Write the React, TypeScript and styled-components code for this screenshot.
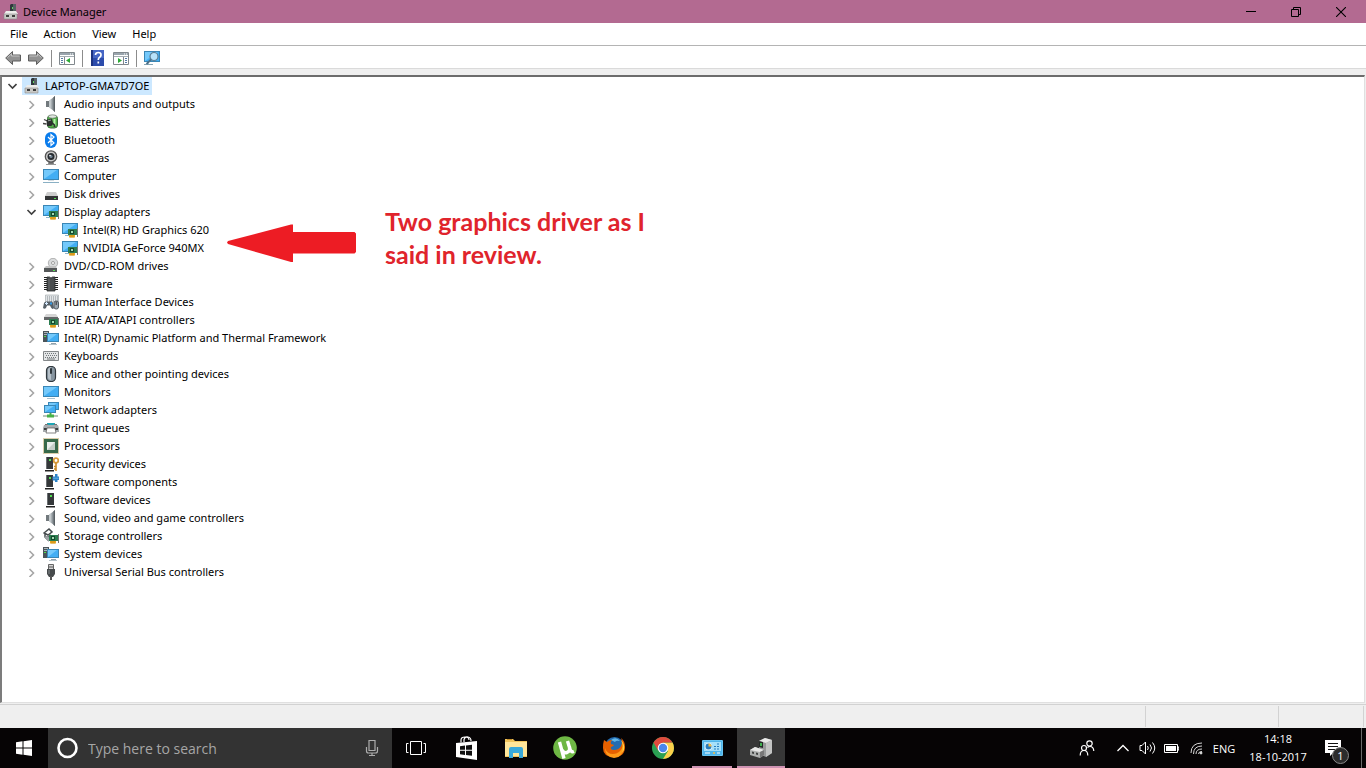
import React from "react";
import styled, { createGlobalStyle } from "styled-components";

const GlobalStyle = createGlobalStyle`
  * { box-sizing: border-box; }
  html, body { margin: 0; padding: 0; }
  body { font-family: "Noto Sans", "Open Sans", sans-serif; font-size: 11px; color: #000; background: #fff; overflow: hidden; }
  button { font: inherit; color: inherit; border: 0; margin: 0; padding: 0; background: transparent; }
  svg { display: block; flex: none; }
  ul { list-style: none; margin: 0; padding: 0; }
`;

const Desktop = styled.div`
  display: flex;
  flex-direction: column;
  height: 100vh;
`;

const Window = styled.main`
  flex: 1;
  min-height: 0;
  display: flex;
  flex-direction: column;
  background: #fff;
`;

const TitleBar = styled.header`
  display: flex;
  align-items: center;
  flex: none;
  height: 23px;
  padding: 0 3px;
  background: #b36a91;
`;

const Title = styled.h1`
  flex: 1;
  margin: 0 0 0 4px;
  font-size: 11px;
  line-height: 16px;
  font-weight: 400;
`;

const CaptionButton = styled.button`
  display: flex;
  align-items: center;
  justify-content: center;
  width: 45px;
  height: 20px;
`;

const MenuBar = styled.nav`
  display: flex;
  flex: none;
  height: 23px;
  padding-left: 2px;
  border-bottom: 1px solid #b4b4b4;
`;

const MenuItem = styled.button`
  padding: 0 8px;
  line-height: 22px;
`;

const Toolbar = styled.div`
  display: flex;
  align-items: center;
  flex: none;
  gap: 7px;
  height: 23px;
  padding: 2px 5px 0;
  border-bottom: 1px solid #dadada;
`;

const ToolButton = styled.button`
  width: 16px;
  height: 16px;
`;

const Separator = styled.span`
  width: 1px;
  height: 17px;
  background: #8c8c8c;
`;

const Frame = styled.section`
  flex: 1;
  min-height: 0;
  display: flex;
  flex-direction: column;
  padding: 6px 1px 1px 0;
  background: #efefef;
`;

const TreePanel = styled.div`
  position: relative;
  flex: 1;
  min-height: 0;
  border: 1px solid #e0e0e0;
  border-top: 2px solid #6c6c6c;
  border-left: 2px solid #7c7c7c;
  background: #fff;
  overflow: hidden;
`;

const Row = styled.div<{ $level: number }>`
  display: flex;
  align-items: center;
  gap: 2px;
  height: 18px;
  padding-left: ${(p) => 2 + p.$level * 19}px;
`;

const Twisty = styled.button`
  display: flex;
  align-items: center;
  justify-content: center;
  width: 16px;
  height: 18px;
`;

const TwistySpace = styled.span`
  width: 16px;
`;

const Node = styled.span<{ $selected?: boolean }>`
  display: flex;
  align-items: center;
  gap: 5px;
  height: 18px;
  padding: 0 3px 0 2px;
  line-height: 18px;
  white-space: nowrap;
  background: ${(p) => (p.$selected ? "#cce8ff" : "transparent")};
`;

const Annotation = styled.aside`
  position: absolute;
  left: 225px;
  top: 128px;
  display: flex;
  gap: 29px;
  color: #e0242c;
`;

const ArrowHolder = styled.span`
  padding-top: 18px;
`;

const Note = styled.p`
  width: 290px;
  margin: 0;
  font-family: Lato, "Open Sans", sans-serif;
  font-size: 25px;
  font-weight: 700;
  line-height: 33px;
`;

const StatusBar = styled.footer`
  display: flex;
  justify-content: flex-end;
  flex: none;
  height: 24px;
  padding: 1px 2px 1px 0;
  border-top: 1px solid #d2d2d2;
  background: #efefef;
`;

const StatusCell = styled.span<{ $width: number }>`
  width: ${(p) => p.$width}px;
  border-left: 1px solid #d2d2d2;
`;

const Taskbar = styled.footer`
  display: flex;
  flex: none;
  height: 40px;
  background: #060405;
  color: #fff;
  font-family: "Open Sans", "Noto Sans", sans-serif;
`;

const TaskButton = styled.button<{ $active?: boolean }>`
  display: flex;
  align-items: center;
  justify-content: center;
  width: 48px;
  height: 40px;
  background: ${(p) => (p.$active ? "#373737" : "transparent")};
`;

const RunningButton = styled(TaskButton)<{ $inset: number }>`
  position: relative;
  &::after {
    content: "";
    position: absolute;
    left: ${(p) => p.$inset}px;
    right: ${(p) => p.$inset}px;
    bottom: 0;
    height: 2px;
    background: #cf93b3;
  }
`;

const SearchBox = styled.label`
  display: flex;
  align-items: center;
  width: 344px;
  padding: 0 12px 0 8px;
  background: #333;
`;

const SearchInput = styled.input`
  flex: 1;
  min-width: 0;
  border: 0;
  padding: 0 10px;
  outline: 0;
  background: transparent;
  color: #fff;
  font: 14px "Open Sans", "Noto Sans", sans-serif;
  &::placeholder { color: #a6a6a6; opacity: 1; }
`;

const PinnedApps = styled.nav`
  display: flex;
  gap: 1px;
  margin-left: 3px;
`;

const Tray = styled.div`
  display: flex;
  margin-left: auto;
`;

const TrayButton = styled.button<{ $width: number }>`
  display: flex;
  align-items: center;
  justify-content: center;
  width: ${(p) => p.$width}px;
  height: 40px;
`;

const PeopleButton = styled(TrayButton)`
  margin-right: 6px;
`;

const Clock = styled(TrayButton)`
  flex-direction: column;
  line-height: 18px;
`;

const NoticeButton = styled(TrayButton)`
  position: relative;
`;

const Badge = styled.span`
  position: absolute;
  right: 12px;
  bottom: 4px;
  width: 17px;
  height: 17px;
  border: 1px solid #8a8a8a;
  border-radius: 9px;
  background: #2c2c2c;
  font-size: 11px;
  line-height: 15px;
  text-align: center;
`;

const ShowDesktop = styled.button`
  width: 5px;
  border-left: 1px solid #6a6a6a;
`;

/* Shared pieces of the device icons */

const Screen = ({ x = 0, y = 1, w = 16, h = 11 }) => (
  <g>
    <rect x={x} y={y} width={w} height={h} fill="#3a86b5" />
    <rect x={x + 1} y={y + 1} width={w - 2} height={h - 2} fill="#42aef4" />
    <path d={`M${x + 1} ${y + h - 1}V${y + 1}H${x + w - 2}Z`} fill="#74c9fb" />
  </g>
);

const Card = () => (
  <g>
    <rect x="6" y="7" width="9" height="6" fill="#2c7d50" />
    <rect x="8" y="8" width="4" height="4" fill="#15482e" />
    <rect x="9" y="9" width="2" height="2" fill="#9fdcb0" />
    <rect x="15" y="6" width="1" height="9" fill="#777" />
    <path d="M7 13h6v2.500H7z" fill="#e8a721" />
    <path d="M9 13v3M11 13v3" stroke="#b87a0c" strokeWidth=".5" />
  </g>
);

const Tower = ({ x = 4 }) => (
  <g>
    <path d={`M${x} 1h7v12h-7z`} fill="#35383a" />
    <path d={`M${x} 1h1v12h-1z`} fill="#6b6f72" />
    <path d={`M${x - 1} 14h9v1.500h-9z`} fill="#222" />
    <rect x={x + 3} y="3" width="2" height="2" fill="#52e052" />
  </g>
);

const Speaker = (
  <g>
    <path d="M3 5h3v6H3z" fill="#72797d" />
    <path d="M6 5l6-5v16l-6-5z" fill="#8d959a" />
    <path d="M6 5l2.500-2v10L6 11z" fill="#c3c9cc" />
    <path d="M10.500 1.200L12 0v16l-1.500-1.200z" fill="#596064" />
  </g>
);

const SystemPc = (
  <g>
    <path d="M0 1h6v11H0z" fill="#4b5459" />
    <path d="M1 2.500h4M1 4.500h4" stroke="#a9b4b9" />
    <rect x="1" y="6" width="2" height="1" fill="#50dc50" />
    <Screen x={4} y={3} w={12} h={9} />
    <path d="M8 13h5v1H8z" fill="#8fa0aa" />
    <path d="M6 14h8v1H6z" fill="#b8c4cb" />
  </g>
);

const DeviceRoot = (
  <g>
    <path d="M7 1l1-1h4v7H7z" fill="#30383c" />
    <path d="M10 0h3v8h-3z" fill="#596165" />
    <rect x="9" y="3" width="1" height="2" fill="#65d565" />
    <path d="M3 7h10l2 3H1z" fill="#ededeb" />
    <path d="M1 10h13v5H1z" fill="#c9c9c6" />
    <path d="M1 10h13v5H1z" fill="none" stroke="#8b8b89" strokeWidth=".6" />
    <path d="M3 11h3v2H3zM9 11h3v2H9z" fill="#3e3e3e" />
  </g>
);

const drawings: Record<string, React.ReactNode> = {
  root: DeviceRoot,
  audio: Speaker,
  battery: (
    <g>
      <rect x="4.500" y="1.500" width="10" height="12.500" rx="3" fill="#4fae47" stroke="#3b6b3c" />
      <ellipse cx="9.500" cy="2.500" rx="4" ry="1.700" fill="#dfe6df" stroke="#6f7a70" strokeWidth=".7" />
      <path d="M11.500 5v7" stroke="#b5efa8" strokeWidth="2" />
      <path d="M1 5.500l3.500 1.500M0 9.500l3.500.5" stroke="#444" strokeWidth="1.300" />
      <path d="M3.500 6l5-1.500 1.500 4-1.500 3.500-4.500 0z" fill="#2b302e" />
      <path d="M9 9.500q3 .5 2.500 3.500" fill="none" stroke="#2b302e" strokeWidth="1.600" />
      <path d="M5 6.800l3-.8" stroke="#9ba6a2" />
    </g>
  ),
  bluetooth: (
    <g>
      <rect x="2" y="0" width="12" height="16" rx="6" fill="#0a7cec" />
      <path d="M5 5l6 6-3 2.500v-11L11 5l-6 6" fill="none" stroke="#fff" strokeWidth="1.200" />
    </g>
  ),
  camera: (
    <g>
      <path d="M3 14.500h10" stroke="#999" />
      <path d="M6 11h4l1 3H5z" fill="#777" />
      <circle cx="8" cy="6.500" r="5.700" fill="#c9c9c9" stroke="#555" strokeWidth="1.300" />
      <circle cx="8" cy="6.500" r="3.500" fill="#272c30" />
      <circle cx="8" cy="6.500" r="1.600" fill="#718494" />
      <circle cx="7" cy="5.500" r=".8" fill="#fff" />
    </g>
  ),
  computer: (
    <g>
      <Screen y={1} />
      <path d="M5 12h6v1H5z" fill="#d3dde3" />
      <path d="M0 14h16v1H0z" fill="#8ab0c4" />
    </g>
  ),
  disk: (
    <g>
      <path d="M4 6h9l2 4H2z" fill="#cdcdcd" />
      <path d="M2 10h13v4H2z" fill="#333536" />
      <rect x="11" y="12" width="2" height="1" fill="#52e052" />
    </g>
  ),
  display: (
    <g>
      <Screen y={1} />
      <path d="M3 13h4v1H3z" fill="#8fb5c9" />
      <Card />
    </g>
  ),
  dvd: (
    <g>
      <circle cx="10" cy="5" r="4.700" fill="#d9dbdc" stroke="#9b9b9b" strokeWidth=".7" />
      <circle cx="10" cy="5" r="1.500" fill="#fff" stroke="#8c8c8c" strokeWidth=".8" />
      <path d="M3 8h9l2 2H1z" fill="#c3c3c3" />
      <path d="M1 10h13v4H1z" fill="#555859" />
      <rect x="10" y="12" width="2" height="1" fill="#52e052" />
    </g>
  ),
  firmware: (
    <g>
      <path d="M2.500 1v14M13.500 1v14" stroke="#222" strokeWidth="3" strokeDasharray="1 1" />
      <path d="M4 1h2.500q1.500 2 3 0H12v14H4z" fill="#4a4d4f" stroke="#26282a" strokeWidth=".8" />
      <path d="M6 3v11" stroke="#6a6e70" />
    </g>
  ),
  hid: (
    <g>
      <path d="M2.500 1h13v8h-13z" fill="#e2e5e7" stroke="#9aa1a5" strokeWidth=".6" />
      <path d="M4 3h11M4 5h11M4 7h11" stroke="#858d92" strokeDasharray="1 1" />
      <path d="M0 14l1-5q1-2 3-1.500h3q2.500-.8 3 1.500l1 5q-1.500 2-3-.5L7 11.500H4L3 14q-1.500 1.500-3 0z" fill="#566068" />
      <path d="M2 9.500h3M3.500 8v3" stroke="#d5eaff" />
      <rect x="7" y="8.500" width="2" height="2" fill="#319ae8" />
      <rect x="11" y="7" width="4.500" height="8" rx="2" fill="#98a3ad" stroke="#515a60" />
      <path d="M13.200 7.500v3.500" stroke="#333" />
    </g>
  ),
  ide: (
    <g>
      <path d="M3 2h10l2 3H1z" fill="#d5d5d5" />
      <path d="M1 5h14v3H1z" fill="#646768" />
      <Card />
    </g>
  ),
  system: SystemPc,
  keyboard: (
    <g>
      <path d="M.5 3.500h15v9H.5z" fill="#e3e5e6" stroke="#838789" />
      <path d="M2 5.500h12M3 7.500h11M2 9.500h12" stroke="#72787b" strokeDasharray="1 1" />
      <path d="M4 11h8" stroke="#72787b" />
    </g>
  ),
  mouse: (
    <g>
      <rect x="3.500" y=".5" width="9" height="15" rx="4" fill="#8795a0" stroke="#31383d" strokeWidth="1.200" />
      <path d="M5 3q2-2 3-2v13q-3 0-3-3z" fill="#b5bfc7" />
      <rect x="7" y="2" width="2" height="6" rx="1" fill="#30383d" />
    </g>
  ),
  monitor: (
    <g>
      <Screen y={2} />
      <path d="M4 14h8v1H4z" fill="#a8c1ce" />
    </g>
  ),
  network: (
    <g>
      <Screen x={5} y={0} w={11} h={8} />
      <Screen x={1} y={3} w={12} h={8} />
      <path d="M7.500 11v3" stroke="#48b149" strokeWidth="2" />
      <path d="M0 14h4M11 14h4" stroke="#b9c4bb" strokeWidth="2" />
      <path d="M4 14h7" stroke="#48b149" strokeWidth="3" />
    </g>
  ),
  printer: (
    <g>
      <path d="M4 3h8v3H4z" fill="#1da5b5" />
      <path d="M2 4h3v2H2zM11 4h3v2h-3z" fill="#777" />
      <path d="M1 5h14l1 3v4H0V8z" fill="#a9adb0" />
      <path d="M1 8h14v2H1z" fill="#3c4042" />
      <path d="M4 8h8l1 5H3z" fill="#fff" stroke="#555" strokeWidth=".7" />
    </g>
  ),
  cpu: (
    <g>
      <rect x=".5" y=".5" width="15" height="15" fill="none" stroke="#b59d56" strokeDasharray="1 1" />
      <rect x="1" y="1" width="14" height="14" fill="#37694a" />
      <rect x="4" y="4" width="8" height="8" fill="#c5cec8" />
      <path d="M4 12l8-8H4z" fill="#e9eeeb" />
    </g>
  ),
  security: (
    <g>
      <Tower x={3} />
      <circle cx="13" cy="4.500" r="2.300" fill="none" stroke="#d79c3c" strokeWidth="1.800" />
      <path d="M13 6.500V15M13 10.500h-2M13 13h-2" stroke="#c88927" strokeWidth="1.600" />
    </g>
  ),
  component: (
    <g>
      <Tower x={3} />
      <path d="M12 0h2.500v2.500H16v3.500h-1.500V8H12V6.500H9.500v-4H12z" fill="#2c83c8" />
      <path d="M10 4.200h5.500" stroke="#7bbdec" strokeWidth=".8" />
    </g>
  ),
  software: <Tower x={4} />,
  storage: (
    <g>
      <path d="M1 5l5-4 3 3-4 3zM2 5v4l4 4M3 9h3l2-2" fill="none" stroke="#454b4e" strokeWidth="1.500" />
      <path d="M1 9l4 4h2v-3L4 8z" fill="#9ca2a5" />
      <Card />
    </g>
  ),
  usb: (
    <g>
      <path d="M5.500.5h5v5h-5z" fill="#d4d4d4" stroke="#656565" />
      <path d="M7 2v2M9 2v2" stroke="#555" />
      <path d="M4 5h8v5l-2 3H6l-2-3z" fill="#464a4c" />
      <path d="M8 12v4" stroke="#555" strokeWidth="2" />
      <path d="M6 6v4" stroke="#858b8d" />
    </g>
  ),
};

const DeviceIcon = ({ name }: { name: string }) => (
  <svg width="16" height="16" viewBox="0 0 16 16" aria-hidden="true">
    {drawings[name]}
  </svg>
);

type Device = { label: string; icon: string; level: number; state?: "open" | "closed"; selected?: boolean };

const group = (label: string, icon: string): Device => ({ label, icon, level: 1, state: "closed" });

const devices: Device[] = [
  { label: "LAPTOP-GMA7D7OE", icon: "root", level: 0, state: "open", selected: true },
  group("Audio inputs and outputs", "audio"),
  group("Batteries", "battery"),
  group("Bluetooth", "bluetooth"),
  group("Cameras", "camera"),
  group("Computer", "computer"),
  group("Disk drives", "disk"),
  { label: "Display adapters", icon: "display", level: 1, state: "open" },
  { label: "Intel(R) HD Graphics 620", icon: "display", level: 2 },
  { label: "NVIDIA GeForce 940MX", icon: "display", level: 2 },
  group("DVD/CD-ROM drives", "dvd"),
  group("Firmware", "firmware"),
  group("Human Interface Devices", "hid"),
  group("IDE ATA/ATAPI controllers", "ide"),
  group("Intel(R) Dynamic Platform and Thermal Framework", "system"),
  group("Keyboards", "keyboard"),
  group("Mice and other pointing devices", "mouse"),
  group("Monitors", "monitor"),
  group("Network adapters", "network"),
  group("Print queues", "printer"),
  group("Processors", "cpu"),
  group("Security devices", "security"),
  group("Software components", "component"),
  group("Software devices", "software"),
  group("Sound, video and game controllers", "audio"),
  group("Storage controllers", "storage"),
  group("System devices", "system"),
  group("Universal Serial Bus controllers", "usb"),
];

const Chevron = ({ open }: { open: boolean }) => (
  <svg width="10" height="10" viewBox="0 0 10 10" aria-hidden="true">
    {open ? (
      <path d="M1.500 3l4 4 4-4" fill="none" stroke="#404040" strokeWidth="1.600" />
    ) : (
      <path d="M3.500 2l4 4-4 4" fill="none" stroke="#a6a6a6" strokeWidth="1.600" />
    )}
  </svg>
);

const Arrow = ({ flip }: { flip?: boolean }) => (
  <svg width="16" height="16" viewBox="0 0 16 16" aria-hidden="true">
    <g transform={flip ? "translate(16 0) scale(-1 1)" : undefined}>
      <path d="M.7 8L7.500 1.500V5h8v6h-8v3.500z" fill="#929292" stroke="#5d5d5d" />
      <path d="M2.500 7.500l4-3.700V6h8" fill="none" stroke="#c4c4c4" />
    </g>
  </svg>
);

const PanelIcon = ({ play }: { play?: boolean }) => (
  <svg width="16" height="16" viewBox="0 0 16 16" aria-hidden="true">
    <path d="M.5 2.500h15v12H.5z" fill="#fff" stroke="#81888d" />
    <path d="M1 3h14v2H1z" fill="#9aa5ad" />
    <path d="M11 4h1M13 4h1" stroke="#fff" />
    <path d="M1 6.500h14" stroke="#a5adb3" />
    {play ? (
      <g>
        <path d="M10.500 7v7" stroke="#81888d" />
        <path d="M5 8l4 2.500L5 13z" fill="#2daa36" />
        <path d="M12 8.500h2M12 10.500h2M12 12.500h2" stroke="#567ba6" />
      </g>
    ) : (
      <g>
        <path d="M5.500 7v7" stroke="#81888d" />
        <path d="M11 8l-4 2.500 4 2.500z" fill="#2daa36" />
        <path d="M2 8.500h2M2 10.500h2M2 12.500h2" stroke="#567ba6" />
      </g>
    )}
  </svg>
);

export default function App() {
  return (
    <Desktop>
      <GlobalStyle />
      <Window>
        <TitleBar>
          <DeviceIcon name="root" />
          <Title>Device Manager</Title>
          <CaptionButton aria-label="Minimize">
            <svg width="10" height="10" viewBox="0 0 10 10"><path d="M0 4.500h10" stroke="#000" /></svg>
          </CaptionButton>
          <CaptionButton aria-label="Restore">
            <svg width="10" height="10" viewBox="0 0 10 10" fill="none" stroke="#000">
              <path d="M.5 2.500h7v7h-7zM2.500 2.500v-2h7v7h-2" />
            </svg>
          </CaptionButton>
          <CaptionButton aria-label="Close">
            <svg width="10" height="10" viewBox="0 0 10 10"><path d="M0 0l10 10M10 0L0 10" stroke="#000" strokeWidth="1.100" /></svg>
          </CaptionButton>
        </TitleBar>

        <MenuBar aria-label="Menu">
          {["File", "Action", "View", "Help"].map((m) => (
            <MenuItem key={m}>{m}</MenuItem>
          ))}
        </MenuBar>

        <Toolbar role="toolbar">
          <ToolButton aria-label="Back"><Arrow /></ToolButton>
          <ToolButton aria-label="Forward"><Arrow flip /></ToolButton>
          <Separator />
          <ToolButton aria-label="Show console tree"><PanelIcon /></ToolButton>
          <Separator />
          <ToolButton aria-label="Help topics">
            <svg width="16" height="16" viewBox="0 0 16 16">
              <path d="M1 0h13v16H1z" fill="#2c4bab" />
              <path d="M1 0h2v16H1z" fill="#1d3380" />
              <path d="M3 0h11v8H3z" fill="#4565c4" />
              <path d="M5.500 5q0-2.500 2.800-2.500T11 5q0 1.500-1.400 2.300T8.300 10M8.300 11.500v2" fill="none" stroke="#fff" strokeWidth="1.700" />
            </svg>
          </ToolButton>
          <ToolButton aria-label="Show action pane"><PanelIcon play /></ToolButton>
          <Separator />
          <ToolButton aria-label="Scan for hardware changes">
            <svg width="16" height="16" viewBox="1 0 16 16">
              <Screen x={1} y={1} w={16} h={11} />
              <path d="M1 14.500h9M5 12v2" stroke="#86a4b3" />
              <circle cx="11" cy="6.500" r="4" fill="#b8e3fa" stroke="#5f7e92" strokeWidth="1.200" />
              <path d="M8 9.500L3.500 14" stroke="#4c7089" strokeWidth="1.800" />
            </svg>
          </ToolButton>
        </Toolbar>

        <Frame>
          <TreePanel>
            <ul role="tree" aria-label="Devices">
              {devices.map((d) => (
                <li key={d.label} role="treeitem" aria-level={d.level + 1} aria-selected={!!d.selected}>
                  <Row $level={d.level}>
                    {d.state ? (
                      <Twisty aria-label={d.state === "open" ? "Collapse" : "Expand"}>
                        <Chevron open={d.state === "open"} />
                      </Twisty>
                    ) : (
                      <TwistySpace />
                    )}
                    <Node $selected={d.selected}>
                      <DeviceIcon name={d.icon} />
                      {d.label}
                    </Node>
                  </Row>
                </li>
              ))}
            </ul>
            <Annotation>
              <ArrowHolder>
                <svg width="129" height="40" viewBox="0 0 129 40" aria-hidden="true">
                  <path d="M1 18L64 1.500h2V9h61.500l1.500 1.500V29l-1.500 1.500H66V39h-2L1 21l-1-1.500z" fill="#ed1c24" />
                </svg>
              </ArrowHolder>
              <Note>Two graphics driver as I said in review.</Note>
            </Annotation>
          </TreePanel>
        </Frame>

        <StatusBar>
          <StatusCell $width={133} />
          <StatusCell $width={85} />
          <StatusCell $width={1} />
        </StatusBar>
      </Window>

      <Taskbar>
        <TaskButton aria-label="Start">
          <svg width="16" height="16" viewBox="0 0 16 16" fill="#fff">
            <path d="M0 2.200L6.500 1.300v6.200H0zM7.500 1.200L16 0v7.500H7.500zM0 8.500h6.500v6.200L0 13.800zM7.500 8.500H16V16l-8.500-1.200z" />
          </svg>
        </TaskButton>
        <SearchBox>
          <svg width="22" height="22" viewBox="0 0 22 22"><circle cx="11.500" cy="11" r="9" fill="none" stroke="#fff" strokeWidth="2.600" /></svg>
          <SearchInput type="text" aria-label="Search" placeholder="Type here to search" />
          <svg width="16" height="18" viewBox="0 0 16 18" fill="none" stroke="#adadad" strokeWidth="1.200">
            <path d="M5 1.500h6v10H5zM2.500 8v4q0 2 2 2h7q2 0 2-2V8M8 14v3M5 16.500h6" />
          </svg>
        </SearchBox>
        <TaskButton aria-label="Task view">
          <svg width="20" height="14" viewBox="0 0 20 14" fill="none" stroke="#fff">
            <path d="M4.500.5h11v13h-11zM2.500 2.500h-2v9h2M17.500 2.500h2v9h-2" />
          </svg>
        </TaskButton>
        <PinnedApps aria-label="Pinned apps">
          <TaskButton aria-label="Store">
            <svg width="22" height="24" viewBox="0 0 22 24">
              <path d="M5 6.500V4q0-3 4-3t4 3M8 6V3.500q1-3 4-2.500 3 .5 3 4" fill="none" stroke="#fff" strokeWidth="1.200" />
              <path d="M0 7l21-2v19L0 21z" fill="#fff" />
              <path d="M4 10.200l5-.6v4.200H4zM10 9.500l6-.7v5h-6zM4 14.800h5V19l-5-.7zM10 14.800h6v5l-6-.7z" fill="#111" />
            </svg>
          </TaskButton>
          <TaskButton aria-label="File Explorer">
            <svg width="22" height="20" viewBox="0 0 22 20">
              <path d="M0 1h8l2 2h12v16H0z" fill="#f0c45c" />
              <path d="M0 4h22v14H0z" fill="#ffe69a" />
              <path d="M2 1.500h5" stroke="#c28d2c" />
              <path d="M4 11q0-2 2-2h10q2 0 2 2v9h-4v-5H8v5H4z" fill="#39a9d9" />
            </svg>
          </TaskButton>
          <TaskButton aria-label="uTorrent">
            <svg width="24" height="24" viewBox="0 0 24 24">
              <circle cx="12" cy="12" r="11.800" fill="#6eb744" />
              <path d="M6.500 6l4.500 16.500M9 14q1.500 3.500 5 2.500 3.500-1.500 2.500-5L14.500 5M16.500 11q1 6 4.500 4.500" fill="none" stroke="#fff" strokeWidth="3.400" />
            </svg>
          </TaskButton>
          <TaskButton aria-label="Firefox">
            <svg width="24" height="24" viewBox="0 0 24 24">
              <circle cx="12.500" cy="10.500" r="9.500" fill="#246cb0" />
              <path d="M9 4q5-4 9 1-4-1-5 1z" fill="#62b7e7" />
              <path d="M2 4l3 2q2-2 5-2-2 2-1 4l3 1q0 1-3 2-1 3 3 3 5 0 7-4 2-4 0-8 4 3 4 9 0 10-11 10T1 12Q1 7 2 4z" fill="#e66000" />
              <path d="M3 12q2 6 8 6 7 0 10-8 1 11-9 12Q3 21 3 12z" fill="#ff9a18" />
              <path d="M19 4q4 4 3 10l-2 3q2-7-1-13z" fill="#ffd33f" />
            </svg>
          </TaskButton>
          <TaskButton aria-label="Chrome">
            <svg width="22" height="22" viewBox="0 0 22 22">
              <circle cx="11" cy="11" r="11" fill="#2aa053" />
              <path d="M11 11V5.500h9.500A11 11 0 0 1 11 22l5-8z" fill="#fcd04b" />
              <path d="M1.500 5.500A11 11 0 0 1 20.500 5.500H11L6 13.500z" fill="#df4b3d" />
              <circle cx="11" cy="11" r="5.300" fill="#fff" />
              <circle cx="11" cy="11" r="4.200" fill="#4b87ec" />
            </svg>
          </TaskButton>
          <RunningButton $inset={4} aria-label="Control Panel">
            <svg width="21" height="16" viewBox="0 0 21 16">
              <rect width="21" height="16" rx="1" fill="#67c4f1" />
              <rect x="1" y="1" width="19" height="14" fill="#4fb4ea" />
              <rect x="2" y="2" width="17" height="9" fill="#a5e0fa" />
              <circle cx="6.500" cy="6.500" r="3.500" fill="#fff" />
              <circle cx="6.500" cy="6.500" r="3" fill="#267cbd" />
              <path d="M6.500 6.500v-3a3 3 0 0 1 3 3z" fill="#f5bc45" />
              <path d="M12 6.500h6M12 9h6M15 4h3" stroke="#267cbd" strokeDasharray="2 1" />
              <path d="M3 13h5M15 13h3" stroke="#fff" />
              <circle cx="12" cy="13" r="1" fill="#f5bc45" />
            </svg>
          </RunningButton>
          <RunningButton $inset={0} $active aria-label="Device Manager">
            <svg width="22" height="22" viewBox="0 0 22 22">
              <path d="M9 4l6-3 7 2v13l-6 4-7-3z" fill="#989a9a" />
              <path d="M9 4l6-3 7 2-6 3z" fill="#e9e9e8" />
              <path d="M16 6l6-3v13l-6 4z" fill="#c3c4c3" />
              <path d="M9 4l4 1v6l-4-1z" fill="#262b28" />
              <rect x="10" y="6" width="2" height="3" fill="#3fb14f" />
              <path d="M0 13l5-3 9 3v5l-4 3-10-3z" fill="#aeb0af" />
              <path d="M0 13l5-3 9 3-4 2z" fill="#e8e8e7" />
              <path d="M10 15l4-2v5l-4 3z" fill="#777" />
              <path d="M2 14.500l2 .5v2l-2-.5zM6 15.500l2 .5v2l-2-.5z" fill="#414342" />
            </svg>
          </RunningButton>
        </PinnedApps>

        <Tray>
          <PeopleButton $width={36} aria-label="People">
            <svg width="16" height="16" viewBox="0 0 16 16" fill="none" stroke="#fff" strokeWidth="1.200">
              <circle cx="10.500" cy="3.500" r="2.700" />
              <circle cx="5" cy="8" r="2.500" />
              <path d="M1.200 15.500q0-5 3.800-5t3.800 5M8.500 7.500q1-1 2.500-1 3.500 0 3.800 4.500" />
            </svg>
          </PeopleButton>
          <TrayButton $width={24} aria-label="Show hidden icons">
            <svg width="12" height="8" viewBox="0 0 12 8"><path d="M.5 7L6 1.500 11.500 7" fill="none" stroke="#fff" strokeWidth="1.300" /></svg>
          </TrayButton>
          <TrayButton $width={24} aria-label="Volume">
            <svg width="17" height="14" viewBox="0 0 17 14" fill="none" stroke="#fff">
              <path d="M1 4.500h2l3.500-3.500v12L3 9.500H1zM8.500 5q1.500 2 0 4M11 3.500q3 3.500 0 7M13.500 1.500q4.500 5.500 0 11" />
            </svg>
          </TrayButton>
          <TrayButton $width={24} aria-label="Battery">
            <svg width="15" height="9" viewBox="0 0 15 9"><path d="M.5.5h13v8H.5zM14 3h1v3h-1z" fill="none" stroke="#fff" /><path d="M2 2h10v5H2z" fill="#fff" /></svg>
          </TrayButton>
          <TrayButton $width={26} aria-label="Network">
            <svg width="13" height="14" viewBox="0 0 13 14" fill="none" stroke="#d8d8d8">
              <path d="M1 12Q1 2 12 2M3.500 13Q3.500 5 12 5M6 13q0-5 6-5M8.500 13q0-2.500 3.500-2.500" />
              <circle cx="11" cy="12" r="1" fill="#fff" />
            </svg>
          </TrayButton>
          <TrayButton $width={30}>ENG</TrayButton>
          <Clock $width={78}>
            <span>14:18</span>
            <span>18-10-2017</span>
          </Clock>
          <NoticeButton $width={44} aria-label="Notifications">
            <svg width="28" height="16" viewBox="0 0 28 16">
              <path d="M0 0h16v13H8l-3 3v-3H0z" fill="#fff" />
              <path d="M3 3.500h10M3 6.500h10M3 9.500h7" stroke="#111" />
            </svg>
            <Badge>1</Badge>
          </NoticeButton>
          <ShowDesktop aria-label="Show desktop" />
        </Tray>
      </Taskbar>
    </Desktop>
  );
}
